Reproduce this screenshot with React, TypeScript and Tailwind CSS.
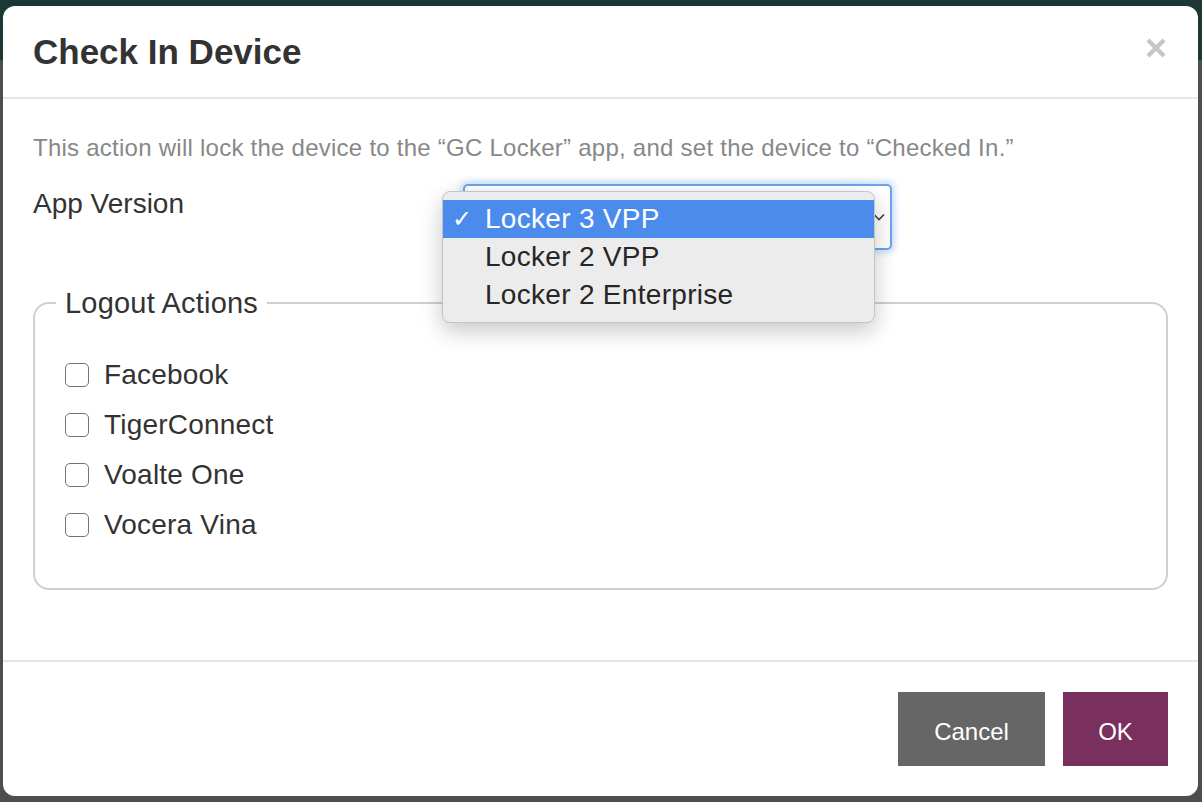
import React from "react";

const font = { fontFamily: '"Liberation Sans", Arial, Helvetica, sans-serif' };

const versions = ["Locker 3 VPP", "Locker 2 VPP", "Locker 2 Enterprise"];
const logoutApps = ["Facebook", "TigerConnect", "Voalte One", "Vocera Vina"];

const CloseIcon = () => (
  <svg width="20" height="20" viewBox="0 0 20 20" fill="none">
    <path d="M2 2L18 18M18 2L2 18" stroke="#c6c6c6" strokeWidth="4.4" strokeLinecap="butt" />
  </svg>
);

const VersionSelect = () => (
  <div className="relative w-[429px] h-[66px]">
    <div className="w-full h-full rounded-[5px] border-2 border-[#6aa5ea] bg-white shadow-[0_0_6px_3px_rgba(102,163,235,0.35)] flex items-center justify-end pr-[5px]">
      <svg width="12" height="8" viewBox="0 0 12 8" fill="none">
        <path d="M1 1.5L6 6.5L11 1.5" stroke="#444" strokeWidth="1.6" />
      </svg>
    </div>
    {/* open native menu */}
    <div className="absolute left-[-21px] top-[7px] w-[433px] py-[8px] rounded-[8px] bg-[#ececec] border border-[#c4c4c4] shadow-[0_8px_22px_rgba(0,0,0,0.22)] z-10">
      {versions.map((v, i) => (
        <div
          key={v}
          className={`h-[38px] flex items-center text-[28px] tracking-[0.3px] leading-none ${
            i === 0 ? "bg-[#4b8bec] text-white" : "text-[#262626]"
          }`}
        >
          <span className="w-[42px] pl-[9px] text-[24px]">{i === 0 ? "✓" : ""}</span>
          <span>{v}</span>
        </div>
      ))}
    </div>
  </div>
);

export default function App() {
  return (
    <div className="relative w-[1202px] h-[802px] bg-[#4d4e4e] overflow-hidden" style={font}>
      <div className="absolute left-0 top-0 w-full h-[60px] bg-[#1b3837]" />
      <div className="relative pt-[6px] pl-[3px]">
        <div className="w-[1195px] h-[790px] bg-white rounded-[12px] flex flex-col">
          <div className="h-[93px] border-b-2 border-[#e5e5e5] flex items-center justify-between pl-[30px] pr-[32px]">
            <h1 className="text-[35px] font-bold text-[#333] leading-none">Check In Device</h1>
            <button className="mt-[-8px]">
              <CloseIcon />
            </button>
          </div>

          <div className="flex-1 px-[30px] pt-[35px]">
            <p className="text-[24px] tracking-[0.25px] leading-[28px] text-[#888]">
              This action will lock the device to the “GC Locker” app, and set the device to “Checked In.”
            </p>
            <div className="flex mt-[22px]">
              <div className="w-[430px] pt-[5px] text-[28px] leading-[30px] text-[#333]">App Version</div>
              <VersionSelect />
            </div>

            <fieldset className="mt-[38px] border-2 border-[#cfcfcf] rounded-[16px] px-[30px] pt-[32px] pb-[38px]">
              <legend className="ml-[-9px] px-[9px] text-[29px] tracking-[0.2px] leading-[30px] text-[#333]">Logout Actions</legend>
              {logoutApps.map((app) => (
                <label key={app} className="h-[50px] flex items-center gap-[15px] text-[28px] tracking-[0.2px] text-[#333]">
                  <span className="w-[24px] h-[24px] rounded-[5px] border-[1.5px] border-[#737373] bg-white" />
                  <span>{app}</span>
                </label>
              ))}
            </fieldset>
          </div>

          <div className="border-t-2 border-[#e5e5e5] px-[30px] pt-[30px] pb-[30px] flex justify-end gap-[18px]">
            <button className="w-[147px] h-[74px] bg-[#666666] text-white text-[24px] pt-[6px]">Cancel</button>
            <button className="w-[105px] h-[74px] bg-[#7a305e] text-white text-[24px] pt-[6px]">OK</button>
          </div>
        </div>
      </div>
    </div>
  );
}
